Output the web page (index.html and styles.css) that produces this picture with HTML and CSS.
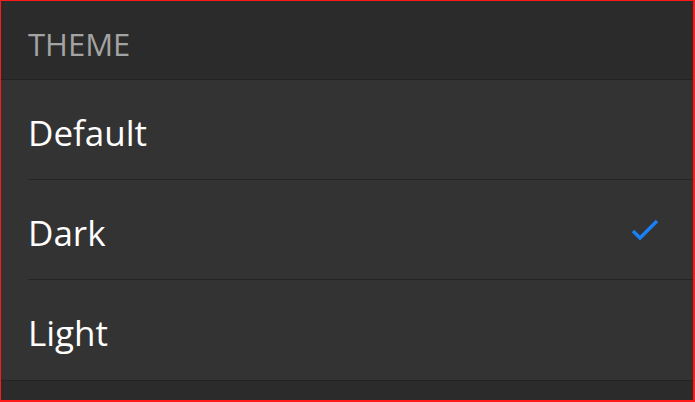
FILE: index.html
```html
<!DOCTYPE html>
<html>
<head>
<meta charset="utf-8">
<link rel="stylesheet" href="styles.css">
</head>
<body>
<div class="frame">
  <div class="section-header">THEME</div>
  <ul class="list">
    <li class="item"><span class="label">Default</span></li>
    <li class="item"><span class="label">Dark</span>
      <svg class="check" width="28" height="23" viewBox="0 0 28 23"><path d="M2 13 L9 20 L26 3" fill="none" stroke="#1a80f5" stroke-width="3.4"/></svg>
    </li>
    <li class="item"><span class="label">Light</span></li>
  </ul>
  <div class="footer"></div>
</div>
</body>
</html>
```
FILE: styles.css
```css
html, body {
  margin: 0;
  padding: 0;
  background: #2b2b2b;
}
.frame {
  width: 695px;
  height: 402px;
  box-sizing: border-box;
  border-style: solid;
  border-color: #ff1a1a;
  border-width: 1px 2px 2px 1px;
  background: #2b2b2b;
  font-family: "Open Sans", "Noto Sans", sans-serif;
  display: flex;
  flex-direction: column;
  overflow: hidden;
}
.section-header {
  height: 79px;
  flex: none;
  box-sizing: border-box;
  padding-left: 27px;
  padding-top: 8px;
  display: flex;
  align-items: center;
  color: #a3a3a3;
  font-size: 31px;
  border-bottom: 1px solid #232323;
}
.list {
  list-style: none;
  margin: 0;
  padding: 0;
  background: #333333;
  border-bottom: 1px solid #232323;
}
.item {
  height: 100px;
  box-sizing: border-box;
  margin-left: 27px;
  padding-left: 0;
  padding-right: 34px;
  display: flex;
  align-items: center;
  justify-content: space-between;
  border-bottom: 1px solid #262626;
}
.item:last-child {
  border-bottom: none;
}
.label {
  color: #ffffff;
  font-size: 35px;
  padding-top: 5px;
}
.check {
  display: block;
}
.footer {
  flex: 1;
}
```
